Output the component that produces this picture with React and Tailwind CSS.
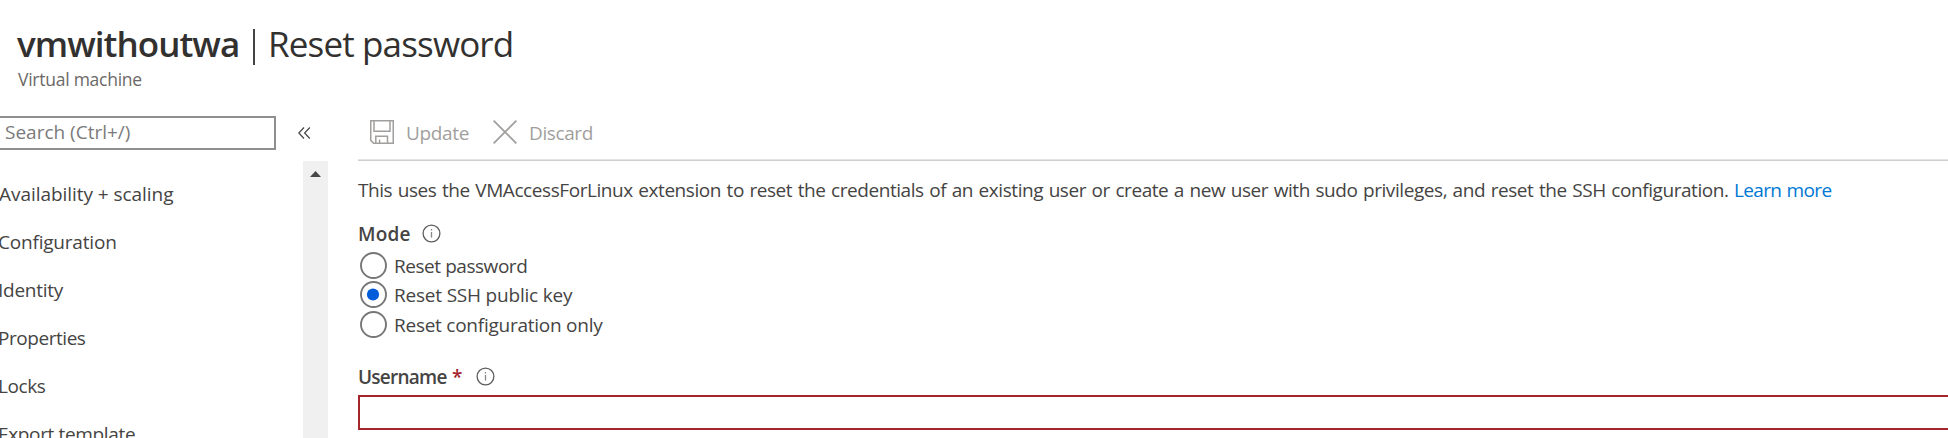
const navItems = [
  { label: "Availability + scaling", cls: "tracking-[-0.05px] -ml-px" },
  { label: "Configuration", cls: "tracking-[-0.2px] -ml-[2px]" },
  { label: "Identity", cls: "tracking-[-0.25px] -ml-[2px]" },
  { label: "Properties", cls: "tracking-[-0.45px] -ml-[2px]" },
  { label: "Locks", cls: "tracking-[-0.4px] -ml-[2px]" },
  { label: "Export template", cls: "tracking-[-0.35px] -ml-[2px]" },
];

const modes = [
  { label: "Reset password", row: "h-[29px]", text: "tracking-[-0.45px]" },
  { label: "Reset SSH public key", row: "h-[29px]", text: "tracking-[-0.2px]", selected: true },
  { label: "Reset configuration only", row: "h-[31px]", text: "tracking-[-0.25px]" },
];

function InfoIcon({ className }) {
  return (
    <svg className={className} width="19" height="19" viewBox="0 0 19 19" fill="none">
      <circle cx="9.5" cy="9.5" r="8.4" stroke="#605e5c" strokeWidth="1.3" />
      <path d="M9.5 8v5.6" stroke="#8a8886" strokeWidth="1.3" />
      <path d="M9.5 5v1.5" stroke="#8a8886" strokeWidth="1.3" />
    </svg>
  );
}

function SaveIcon() {
  return (
    <svg width="24" height="24" viewBox="0 0 24 24" fill="none" stroke="#a19f9d" strokeWidth="1.5">
      <path d="M.75.75h22.5v22.5H3.6L.75 20.4z" />
      <path d="M4 .75v10.5h16V.75" />
      <path d="M5.8 23.25v-7h11.7v7" />
      <path d="M9.6 23.25v-3.6" />
    </svg>
  );
}

function Radio({ selected }) {
  return (
    <svg width="27" height="27" viewBox="0 0 27 27" fill="none">
      <circle cx="13.5" cy="13.5" r="12.5" stroke="#767676" strokeWidth="1.9" />
      {selected && <circle cx="13" cy="13.5" r="6.1" fill="#015cda" />}
    </svg>
  );
}

export default function App() {
  return (
    <div className="flex h-[438px] w-full flex-col overflow-hidden bg-white font-['Open_Sans',sans-serif] text-[19px] whitespace-nowrap text-[#454443]">
      <header className="shrink-0 pt-[19px] pl-[17px]">
        <h1 className="flex h-12 items-center text-[35px] leading-none text-[#323130]">
          <span className="w-[236px] font-semibold tracking-[-0.95px]">vmwithoutwa</span>
          <span className="mt-2 mr-[13px] h-9 w-[2px] bg-[#444]" />
          <span className="tracking-[-0.85px]">Reset password</span>
        </h1>
        <p className="flex h-6 items-center pl-px text-[17.5px] tracking-[-0.25px] text-[#6b6967]">Virtual machine</p>
      </header>

      <div className="flex min-h-0 flex-1">
        <aside className="flex w-[328px] shrink-0 flex-col pt-[25px]">
          <div className="flex h-[34px] shrink-0 items-center">
            <div className="flex h-[34px] w-[276px] items-center border-y-2 border-r-2 border-[#8f8f8f] pb-[2px] pl-[5px] text-[#7a7a7a]">
              Search (Ctrl+/)
            </div>
            <svg className="ml-[22px]" width="13" height="12" viewBox="0 0 13 12" fill="none" stroke="#444" strokeWidth="1.2">
              <path d="M6 .5.8 6 6 11.5M11.8.5 6.6 6l5.2 5.5" />
            </svg>
          </div>
          <div className="mt-[11px] flex min-h-0 flex-1">
            <nav className="w-[303px] pt-[9px]">
              {navItems.map((item) => (
                <div key={item.label} className="flex h-12 items-center">
                  <span className={item.cls}>{item.label}</span>
                </div>
              ))}
            </nav>
            <div className="w-[25px] bg-[#f0f0f0] pt-[10px] pl-[7px]">
              <svg width="11" height="6" viewBox="0 0 11 6" fill="#484848">
                <path d="M0 6 5.5 0 11 6z" />
              </svg>
            </div>
          </div>
        </aside>

        <main className="min-w-0 flex-1 pl-[30px]">
          <div className="flex h-[68px] items-center pt-[14px] pl-3 text-[#a19f9d]">
            <SaveIcon />
            <span className="mt-[2px] ml-[12px] w-[87px] tracking-[-0.35px]">Update</span>
            <svg width="24" height="24" viewBox="0 0 24 24" fill="none" stroke="#a19f9d" strokeWidth="1.8">
              <path d="m.6.6 22.8 22.8M23.4.6.6 23.4" />
            </svg>
            <span className="mt-[2px] ml-[12px] tracking-[-0.4px]">Discard</span>
          </div>
          <div className="h-[2px] border-t border-[#e4e4e4] bg-[#cfcfcf]" />

          <p className="flex h-[58px] items-center">
            <span className="w-[1376px] tracking-[-0.43px] [word-spacing:1px]">
              This uses the VMAccessForLinux extension to reset the credentials of an existing user or create a new user with sudo privileges, and reset the SSH configuration.
            </span>
            <a className="tracking-[-0.65px] text-[#0078d4] [word-spacing:1px]">Learn more</a>
          </p>

          <div className="flex h-[29px] items-center font-semibold">
            <span className="mt-[2px] w-[64px] tracking-[0.2px]">Mode</span>
            <InfoIcon />
          </div>
          <div className="mt-[3px] pl-[2px]">
            {modes.map((mode) => (
              <div key={mode.label} className={`flex items-center gap-[7px] ${mode.row}`}>
                <Radio selected={mode.selected} />
                <span className={`mt-[2px] ${mode.text}`}>{mode.label}</span>
              </div>
            ))}
          </div>

          <div className="mt-[23px] flex h-[27px] items-center font-semibold">
            <span className="mt-[2px] w-[94px] tracking-[-0.75px]">Username</span>
            <span className="mt-[2px] w-[24px] text-[#a4262c]">*</span>
            <InfoIcon />
          </div>
          <div className="mt-[5px] h-[35px] border-y-2 border-l-2 border-[#a4262c]" />
        </main>
      </div>
    </div>
  );
}
